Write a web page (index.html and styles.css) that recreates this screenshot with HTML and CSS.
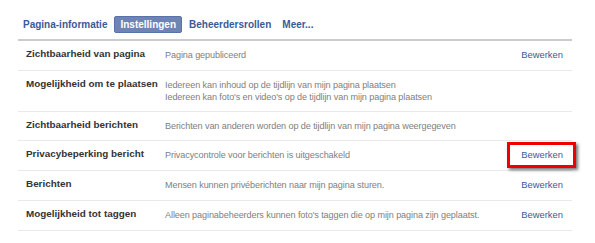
FILE: index.html
```html
<!DOCTYPE html>
<html>
<head>
<meta charset="utf-8">
<link rel="stylesheet" href="styles.css">
</head>
<body>
<div class="page">
  <nav class="tabs">
    <a class="tab">Pagina-informatie</a>
    <a class="tab active">Instellingen</a>
    <a class="tab">Beheerdersrollen</a>
    <a class="tab">Meer...</a>
  </nav>
  <div class="settings">
    <div class="row">
      <div class="label">Zichtbaarheid van pagina</div>
      <div class="desc">Pagina gepubliceerd</div>
      <a class="edit">Bewerken</a>
    </div>
    <div class="row">
      <div class="label">Mogelijkheid om te plaatsen</div>
      <div class="desc">Iedereen kan inhoud op de tijdlijn van mijn pagina plaatsen<br>Iedereen kan foto's en video's op de tijdlijn van mijn pagina plaatsen</div>
    </div>
    <div class="row">
      <div class="label">Zichtbaarheid berichten</div>
      <div class="desc">Berichten van anderen worden op de tijdlijn van mijn pagina weergegeven</div>
    </div>
    <div class="row">
      <div class="label">Privacybeperking bericht</div>
      <div class="desc">Privacycontrole voor berichten is uitgeschakeld</div>
      <a class="edit highlighted">Bewerken</a>
    </div>
    <div class="row">
      <div class="label">Berichten</div>
      <div class="desc">Mensen kunnen privéberichten naar mijn pagina sturen.</div>
      <a class="edit">Bewerken</a>
    </div>
    <div class="row">
      <div class="label">Mogelijkheid tot taggen</div>
      <div class="desc">Alleen paginabeheerders kunnen foto's taggen die op mijn pagina zijn geplaatst.</div>
      <a class="edit">Bewerken</a>
    </div>
  </div>
</div>
</body>
</html>
```

FILE: styles.css
```css
html, body {
  margin: 0;
  padding: 0;
  background: #ffffff;
}
body {
  font-family: "Liberation Sans", Arial, sans-serif;
  font-size: 10px;
  color: #333333;
}
.page {
  width: 554px;
  margin-left: 18px;
  padding-top: 16px;
}
.tabs {
  display: flex;
  align-items: center;
  gap: 3px;
  padding-left: 1px;
  height: 16px;
  margin-bottom: 7px;
}
.tab {
  font-size: 10px;
  font-weight: bold;
  color: #3b5998;
  padding: 1px 3px;
  line-height: 13px;
  border: 1px solid transparent;
  border-radius: 2px;
  white-space: nowrap;
}
.tab.active {
  background: #6d84b4;
  border-color: #5973a9;
  color: #ffffff;
  padding: 1px 5px;
}
.settings {
  border-top: 2px solid #cccccc;
}
.row {
  display: flex;
  align-items: flex-start;
  padding: 6px 9px 8px 8px;
  border-bottom: 1px solid #e9e9e9;
  line-height: 14px;
}
.label {
  width: 139px;
  flex: none;
  font-size: 9.9px;
  font-weight: bold;
  color: #333333;
  white-space: nowrap;
}
.desc {
  flex: 1;
  font-size: 9.1px;
  letter-spacing: -0.1px;
  color: #808080;
  line-height: 12px;
  padding-top: 2px;
  white-space: nowrap;
}
.edit {
  position: relative;
  font-size: 9.4px;
  color: #3b5998;
  flex: none;
  padding-top: 1px;
}
.edit.highlighted::after {
  content: "";
  position: absolute;
  left: -14px;
  right: -13px;
  top: -5px;
  bottom: -6px;
  border: 3px solid #ee0000;
  box-shadow: 2px 2px 3px rgba(0, 0, 0, 0.55);
}
```
